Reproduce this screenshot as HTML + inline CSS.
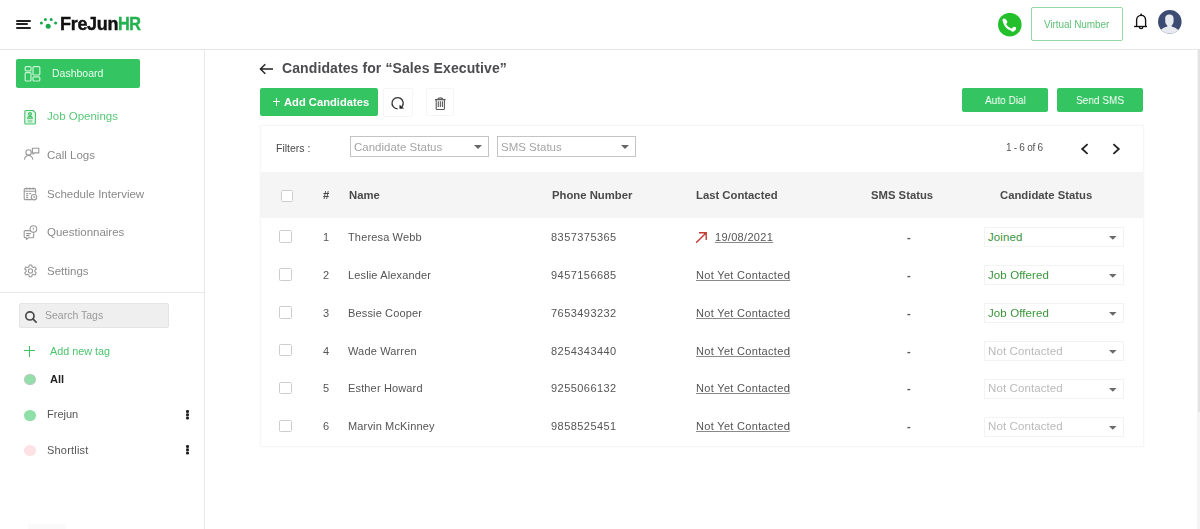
<!DOCTYPE html>
<html><head><meta charset="utf-8">
<style>
*{margin:0;padding:0;box-sizing:border-box}
html,body{width:1200px;height:529px;overflow:hidden;background:#fff;font-family:"Liberation Sans",sans-serif;position:relative}
.a{position:absolute;white-space:nowrap;line-height:1;will-change:transform}
.hdr{position:absolute;left:0;top:0;width:1200px;height:50px;border-bottom:1px solid #e6e6e6;background:#fff}
.side{position:absolute;left:0;top:50px;width:205px;height:479px;border-right:1px solid #e8e8e8}
.nav{font-size:11.5px;color:#8a8a8a}
.btn{position:absolute;background:#34c462;border-radius:2px;color:#fff}
.sel{position:absolute;border:1px solid #c4c4c4;background:#fff}
.tri{position:absolute;width:0;height:0;border-left:4px solid transparent;border-right:4px solid transparent;border-top:4px solid #666}
.th{font-size:11.3px;font-weight:bold;color:#4a4a4a}
.td{font-size:11px;color:#555}
.cb{position:absolute;width:12.8px;height:12.8px;border:1px solid #cdcdcd;border-radius:1.5px;background:#fff}
.lnk{font-size:11px;color:#555;text-decoration:underline;text-decoration-color:#8a8a8a}
.cs{position:absolute;left:984px;width:140px;height:20px;border:1px solid #f3f3f3;background:#fff}
.cst{position:absolute;left:3px;top:3.9px;font-size:11.5px;letter-spacing:0.1px;line-height:1;white-space:nowrap}
.tri2{position:absolute;left:123.7px;top:8px}
</style></head><body>

<!-- HEADER -->
<div class="hdr"></div>
<div class="a" style="left:16.3px;top:19.6px;width:15px;height:1.7px;background:#222;border-radius:1px"></div>
<div class="a" style="left:16.3px;top:23.3px;width:11.5px;height:1.7px;background:#222;border-radius:1px"></div>
<div class="a" style="left:16.3px;top:27.2px;width:15px;height:1.7px;background:#222;border-radius:1px"></div>
<svg class="a" style="left:38px;top:15px" width="22" height="16" viewBox="38 15 22 16">
 <circle cx="41.4" cy="23" r="1.5" fill="#19a94a"/>
 <circle cx="45.4" cy="19.5" r="1.5" fill="#19a94a"/>
 <circle cx="51.2" cy="19.5" r="1.5" fill="#19a94a"/>
 <circle cx="55.6" cy="23" r="1.5" fill="#19a94a"/>
 <circle cx="48.2" cy="26.3" r="2.5" fill="#19a94a"/>
</svg>
<div class="a" style="left:60px;top:15px;font-size:18px;font-weight:bold;color:#111;letter-spacing:-0.3px;-webkit-text-stroke:0.4px #111">FreJun<span style="display:inline-block;transform:scaleX(0.9);transform-origin:0 0;color:#21b24f;letter-spacing:-0.4px;-webkit-text-stroke:0.4px #21b24f">HR</span></div>

<svg class="a" style="left:998.2px;top:12.5px" width="24" height="24" viewBox="0 0 24 24">
 <circle cx="11.8" cy="11.7" r="11.8" fill="#23c02c"/>
 <g fill="#fff"><ellipse cx="6.9" cy="8.1" rx="1.9" ry="2.9" transform="rotate(-38 6.9 8.1)"/><ellipse cx="15.6" cy="16.2" rx="2.9" ry="1.9" transform="rotate(-38 15.6 16.2)"/></g><path d="M6.2 9.3Q7.6 15.2 14.4 17" fill="none" stroke="#fff" stroke-width="2.2" stroke-linecap="round"/>
</svg>
<div class="a" style="left:1031px;top:7px;width:92px;height:34px;border:1px solid #92d9a5;border-radius:2px"></div>
<div class="a" style="left:1044.3px;top:19.8px;font-size:10px;color:#5fc076;letter-spacing:-0.1px">Virtual Number</div>
<svg class="a" style="left:1132px;top:12px" width="17" height="19" viewBox="0 0 17 19" fill="none" stroke="#111" stroke-width="1.35">
 <path d="M4.6 14.2V8.2C4.6 5.1 6.4 3.3 9.1 3.3S13.6 5.1 13.6 8.2V14.2"/>
 <path d="M2.1 14.5H15"/>
 <path d="M7.4 14.9a1.7 1.7 0 0 0 3.4 0"/>
 <circle cx="9.1" cy="2.4" r="0.9" fill="#111" stroke="none"/>
</svg>
<svg class="a" style="left:1158px;top:9.5px" width="24" height="24" viewBox="0 0 24 24">
 <defs><clipPath id="av"><circle cx="11.8" cy="11.8" r="11.8"/></clipPath></defs>
 <circle cx="11.8" cy="11.8" r="11.8" fill="#3b4b72"/>
 <g clip-path="url(#av)">
  <path d="M7.2 9C7.2 5.5 9 4.6 11.4 4.6S15.6 5.5 15.6 9V11C15.6 13 14.6 14.5 13.6 15.5V16.5C15.5 17 18.5 18 21 20.5V26H2V20.5C4.5 18 7.3 17 9.3 16.5V15.5C8.2 14.5 7.2 13 7.2 11Z" fill="#e7eaef"/>
 </g>
</svg>

<!-- SIDEBAR -->
<div class="side"></div>
<div class="btn" style="left:16px;top:59px;width:124px;height:29px"></div>
<svg class="a" style="left:24px;top:65px" width="18" height="18" viewBox="0 0 18 18" fill="none" stroke="#c8f5d4" stroke-width="1.2">
 <rect x="1.2" y="1.6" width="5.8" height="4.3" rx="1"/>
 <rect x="1.2" y="7.6" width="5.8" height="8.4" rx="1"/>
 <rect x="9" y="1.6" width="6.8" height="8.4" rx="1"/>
 <rect x="9" y="11.8" width="6.8" height="4.2" rx="1"/>
</svg>
<div class="a" style="left:52px;top:67.6px;font-size:10.5px;color:#eafff0">Dashboard</div>

<svg class="a" style="left:23px;top:109px" width="14" height="17" viewBox="0 0 14 17" fill="none" stroke="#45c46a" stroke-width="1.1">
 <path d="M2.9 1.5H10.2L12.4 3.7V14C12.4 14.7 12 15 11.3 15H2.9C2.2 15 1.8 14.7 1.8 14V2.6C1.8 1.9 2.2 1.5 2.9 1.5Z" fill="#e6f7ea"/>
 <circle cx="7" cy="5.1" r="1.5" fill="#9fe0b0"/>
 <path d="M4.6 9.2c.3-1.400 1.100-2 2.400-2s2.100.6 2.400 2z" fill="#9fe0b0"/>
 <path d="M4.6 11.2h4.8M4.6 12.9h4.8" stroke="#7fd698"/>
</svg>
<div class="a nav" style="left:47.2px;top:111px;color:#59c878">Job Openings</div>

<svg class="a" style="left:23px;top:147px" width="18" height="14" viewBox="0 0 18 14" fill="none" stroke="#999" stroke-width="1.1">
 <circle cx="5.6" cy="5.4" r="2.7"/>
 <path d="M1.4 12.6c.4-2.700 2-4.100 4.200-4.100s3.800 1.400 4.200 4.100"/>
 <path d="M9.4 1.3h6.400v4.600h-4.300l-1.400 1.200v-1.200h-.7z"/>
</svg>
<div class="a nav" style="left:47.2px;top:149.8px">Call Logs</div>

<svg class="a" style="left:23px;top:187px" width="15" height="14" viewBox="0 0 15 14" fill="none" stroke="#999" stroke-width="1.1">
 <path d="M8.800 12.6H2.200c-.6 0-1-.4-1-1V2.600c0-.6.4-1 1-1h9.400c.6 0 1 .4 1 1v4.200"/>
 <path d="M1.200 4.200h11.400M3.600 .6v2M6.900 .6v2M10.200 .6v2"/>
 <path d="M3.2 6.600h2M6.200 6.600h2M3.200 8.600h2M3.200 10.600h2"/>
 <circle cx="11" cy="10.2" r="2.700"/>
 <path d="M11 8.900v1.400l.9.6"/>
</svg>
<div class="a nav" style="left:47.2px;top:188.5px">Schedule Interview</div>

<svg class="a" style="left:23px;top:225px" width="16" height="15" viewBox="0 0 16 15" fill="none" stroke="#999" stroke-width="1.1">
 <circle cx="10.4" cy="4.1" r="3.300"/>
 <path d="M10.4 2.8v1.800M10.4 5.500v.3"/>
 <path d="M7.400 5.600H2.200c-.6 0-1 .4-1 1v5.200c0 .6.4 1 1 1h1.200v1.600l2-1.600h4.300c.6 0 1-.4 1-1V8.200"/>
 <path d="M3.200 8.600h4.600M3.200 10.600h3.400"/>
</svg>
<div class="a nav" style="left:47.2px;top:227px">Questionnaires</div>

<svg class="a" style="left:23px;top:263.5px" width="15" height="15" viewBox="0 0 15 15" fill="none" stroke="#999" stroke-width="1.1">
 <path d="M6.300 1h2.400l.4 1.800 1.200.7 1.800-.6 1.200 2.100-1.400 1.200v1.400l1.400 1.200-1.200 2.100-1.800-.6-1.200.7-.4 1.800H6.300l-.4-1.800-1.200-.7-1.800.6-1.200-2.100 1.400-1.200V6.200L1.700 5l1.200-2.100 1.800.6 1.200-.7z" stroke-linejoin="round"/>
 <circle cx="7.500" cy="6.900" r="2.100"/>
</svg>
<div class="a nav" style="left:47.2px;top:265.8px">Settings</div>

<div class="a" style="left:0;top:292px;width:205px;height:1px;background:#e8e8e8"></div>

<div class="a" style="left:18.5px;top:303px;width:149.5px;height:25px;background:#efefef;border:1px solid #e4e4e4;border-radius:2px"></div>
<svg class="a" style="left:24px;top:310px" width="14" height="14" viewBox="0 0 14 14" fill="none" stroke="#4a4a4a" stroke-width="1.7">
 <circle cx="5.9" cy="5.9" r="4.1"/>
 <path d="M8.9 8.9l3.2 3.2" stroke-linecap="round"/>
</svg>
<div class="a" style="left:45px;top:310.3px;font-size:10.5px;color:#9a9a9a">Search Tags</div>

<div class="a" style="left:24px;top:350.3px;width:11px;height:1.4px;background:#3cc464"></div>
<div class="a" style="left:28.8px;top:345.5px;width:1.4px;height:11px;background:#3cc464"></div>
<div class="a" style="left:50px;top:346px;font-size:10.8px;color:#4cc46e">Add new tag</div>

<div class="a" style="left:24px;top:374px;width:11.5px;height:11px;border-radius:50%;background:#93dfaa;border:1px solid #b9c9bd"></div>
<div class="a" style="left:50px;top:373.5px;font-size:11px;font-weight:bold;color:#222">All</div>

<div class="a" style="left:24px;top:409.5px;width:11.5px;height:11px;border-radius:50%;background:#8fe0a6"></div>
<div class="a" style="left:47px;top:409px;font-size:11px;color:#555">Frejun</div>
<div class="a" style="left:186.2px;top:409.5px;width:2.6px;height:2.6px;border-radius:50%;background:#222;box-shadow:0 3.3px 0 #222,0 6.6px 0 #222"></div>

<div class="a" style="left:24px;top:445px;width:11.5px;height:11px;border-radius:50%;background:#fde1e5"></div>
<div class="a" style="left:47px;top:444.5px;font-size:11px;color:#555;letter-spacing:0.2px">Shortlist</div>
<div class="a" style="left:186.2px;top:445px;width:2.6px;height:2.6px;border-radius:50%;background:#222;box-shadow:0 3.3px 0 #222,0 6.6px 0 #222"></div>

<!-- MAIN -->
<svg class="a" style="left:259px;top:63px" width="16" height="12" viewBox="0 0 16 12" fill="none" stroke="#222" stroke-width="1.4">
 <path d="M14 6H1.800M6.300 1.300L1.400 6l4.900 4.700"/>
</svg>
<div class="a" style="left:281.5px;top:60.5px;font-size:14px;font-weight:bold;color:#4b4b50;letter-spacing:0.1px">Candidates for “Sales Executive”</div>

<div class="btn" style="left:260px;top:88px;width:118px;height:28px"></div>
<div class="a" style="left:273px;top:101.2px;width:7px;height:1.2px;background:#fff"></div>
<div class="a" style="left:275.9px;top:98px;width:1.2px;height:7.5px;background:#fff"></div>
<div class="a" style="left:283.6px;top:96.8px;font-size:11.2px;font-weight:bold;color:#fff">Add Candidates</div>

<div class="a" style="left:382.5px;top:88px;width:30px;height:29px;border:1px solid #f5f5f5;border-radius:2px;box-shadow:0 0 1px rgba(0,0,0,0.03)"></div>
<svg class="a" style="left:389px;top:95px" width="18" height="17" viewBox="0 0 18 17" fill="none" stroke="#333" stroke-width="1.3">
 <path d="M8.6 13.8A5.6 5.6 0 1 1 12.9 11.8"/>
 <path d="M10.75 10.3V13.45L14.5 13.25Z" fill="#222" stroke="#222" stroke-width=".5" stroke-linejoin="round"/>
</svg>

<div class="a" style="left:426px;top:88px;width:28px;height:28px;border:1px solid #f5f5f5;border-radius:2px;box-shadow:0 0 1px rgba(0,0,0,0.03)"></div>
<svg class="a" style="left:434px;top:97px" width="13" height="14" viewBox="0 0 13 14" fill="none" stroke="#5a5a5a" stroke-width="1.1">
 <path d="M2.2 3V11.7C2.2 12.2 2.5 12.5 3 12.5H9.6C10.1 12.5 10.4 12.2 10.4 11.7V3"/>
 <path d="M1.1 2.6H11.5" stroke-width="1.3"/>
 <path d="M4 2.4C4 1.400 4.700 0.9 6.300 0.9S8.600 1.400 8.600 2.4" stroke-width="1.2"/>
 <path d="M4.3 4.3V10M6.35 4.3V10M8.4 4.3V10"/>
</svg>

<div class="btn" style="left:962px;top:88px;width:86px;height:24px"></div>
<div class="a" style="left:985px;top:94.6px;font-size:11px;color:#fff;transform:scaleX(0.915);transform-origin:0 0">Auto Dial</div>
<div class="btn" style="left:1057px;top:88px;width:86px;height:24px"></div>
<div class="a" style="left:1075.5px;top:94.6px;font-size:11px;color:#fff;transform:scaleX(0.915);transform-origin:0 0">Send SMS</div>

<!-- CARD -->
<div class="a" style="left:259.5px;top:124.5px;width:883.5px;height:322px;border:1px solid #f6f6f6;box-shadow:0 0 2px rgba(0,0,0,0.04);background:#fff"></div>
<div class="a" style="left:276.4px;top:142.7px;font-size:10.5px;color:#4a4a4a">Filters :</div>
<div class="sel" style="left:350px;top:136px;width:139px;height:21px"></div>
<div class="a" style="left:354.4px;top:141.5px;font-size:11.5px;color:#a5a5a5">Candidate Status</div>
<div class="tri" style="left:473.5px;top:145px"></div>
<div class="sel" style="left:497px;top:136px;width:139px;height:21px"></div>
<div class="a" style="left:501.4px;top:141.5px;font-size:11.5px;color:#a5a5a5">SMS Status</div>
<div class="tri" style="left:620.5px;top:145px"></div>

<div class="a" style="left:1006px;top:143px;font-size:10px;color:#555;letter-spacing:-0.27px">1 - 6 of 6</div>
<svg class="a" style="left:1079px;top:142px" width="12" height="14" viewBox="0 0 12 14" fill="none" stroke="#222" stroke-width="1.8">
 <path d="M8.600 2.200L3.200 7l5.400 4.800"/>
</svg>
<svg class="a" style="left:1110px;top:142px" width="12" height="14" viewBox="0 0 12 14" fill="none" stroke="#222" stroke-width="1.8">
 <path d="M3.400 2.200L8.800 7l-5.400 4.800"/>
</svg>

<div class="a" style="left:260px;top:172px;width:883px;height:46px;background:#f5f5f5"></div>
<div class="cb" style="left:280.5px;top:189.5px"></div>
<div class="a th" style="left:323px;top:189.5px">#</div>
<div class="a th" style="left:349px;top:189.5px">Name</div>
<div class="a th" style="left:552px;top:189.5px">Phone Number</div>
<div class="a th" style="left:695.5px;top:189.5px">Last Contacted</div>
<div class="a th" style="left:870.5px;top:189.5px">SMS Status</div>
<div class="a th" style="left:999.5px;top:189.5px">Candidate Status</div>

<!-- ROWS -->
<div class="a" style="left:1197px;top:50px;width:3px;height:479px;background:#f4f4f4"></div>
<div class="a" style="left:1197.5px;top:50px;width:2.5px;height:362px;background:#e3e3e3"></div>
<div class="a" style="left:28px;top:524px;width:38px;height:5px;background:#fafafa"></div>
<!--ROWS-->
<div class="cb" style="left:279px;top:230.0px"></div>
<div class="a td" style="left:323.4px;top:231.8px">1</div>
<div class="a td" style="left:348px;top:231.8px;letter-spacing:0.15px">Theresa Webb</div>
<div class="a td" style="left:550.8px;top:231.8px;letter-spacing:0.45px">8357375365</div>
<svg class="a" style="left:694.6px;top:231.1px" width="13" height="13" viewBox="0 0 13 13" fill="none" stroke="#bf3a32" stroke-width="1.4"><path d="M1.200 11.800L11 2M4 1.800h7.200V9"/></svg>
<div class="a lnk" style="left:715.2px;top:231.8px;letter-spacing:0.3px">19/08/2021</div>
<div class="a td" style="left:907px;top:231.8px;font-weight:bold">-</div>
<div class="cs" style="top:227.0px"><div class="cst" style="color:#3a963a">Joined</div><svg class="tri2" width="8" height="4" viewBox="0 0 8 4"><path d="M0 0H7.6L3.8 3.8Z" fill="#6a6a6a"/></svg></div>
<div class="cb" style="left:279px;top:267.9px"></div>
<div class="a td" style="left:323.4px;top:269.7px">2</div>
<div class="a td" style="left:348px;top:269.7px;letter-spacing:0.15px">Leslie Alexander</div>
<div class="a td" style="left:550.8px;top:269.7px;letter-spacing:0.45px">9457156685</div>
<div class="a lnk" style="left:695.5px;top:269.7px;letter-spacing:0.32px">Not Yet Contacted</div>
<div class="a" style="left:789.3px;top:271.4px;width:1px;height:8.5px;background:#c4c4c4"></div>
<div class="a td" style="left:907px;top:269.7px;font-weight:bold">-</div>
<div class="cs" style="top:264.9px"><div class="cst" style="color:#3a963a">Job Offered</div><svg class="tri2" width="8" height="4" viewBox="0 0 8 4"><path d="M0 0H7.6L3.8 3.8Z" fill="#6a6a6a"/></svg></div>
<div class="cb" style="left:279px;top:305.8px"></div>
<div class="a td" style="left:323.4px;top:307.6px">3</div>
<div class="a td" style="left:348px;top:307.6px;letter-spacing:0.15px">Bessie Cooper</div>
<div class="a td" style="left:550.8px;top:307.6px;letter-spacing:0.45px">7653493232</div>
<div class="a lnk" style="left:695.5px;top:307.6px;letter-spacing:0.32px">Not Yet Contacted</div>
<div class="a" style="left:789.3px;top:309.3px;width:1px;height:8.5px;background:#c4c4c4"></div>
<div class="a td" style="left:907px;top:307.6px;font-weight:bold">-</div>
<div class="cs" style="top:302.8px"><div class="cst" style="color:#3a963a">Job Offered</div><svg class="tri2" width="8" height="4" viewBox="0 0 8 4"><path d="M0 0H7.6L3.8 3.8Z" fill="#6a6a6a"/></svg></div>
<div class="cb" style="left:279px;top:343.7px"></div>
<div class="a td" style="left:323.4px;top:345.5px">4</div>
<div class="a td" style="left:348px;top:345.5px;letter-spacing:0.15px">Wade Warren</div>
<div class="a td" style="left:550.8px;top:345.5px;letter-spacing:0.45px">8254343440</div>
<div class="a lnk" style="left:695.5px;top:345.5px;letter-spacing:0.32px">Not Yet Contacted</div>
<div class="a" style="left:789.3px;top:347.2px;width:1px;height:8.5px;background:#c4c4c4"></div>
<div class="a td" style="left:907px;top:345.5px;font-weight:bold">-</div>
<div class="cs" style="top:340.7px"><div class="cst" style="color:#bababa">Not Contacted</div><svg class="tri2" width="8" height="4" viewBox="0 0 8 4"><path d="M0 0H7.6L3.8 3.8Z" fill="#6a6a6a"/></svg></div>
<div class="cb" style="left:279px;top:381.6px"></div>
<div class="a td" style="left:323.4px;top:383.4px">5</div>
<div class="a td" style="left:348px;top:383.4px;letter-spacing:0.15px">Esther Howard</div>
<div class="a td" style="left:550.8px;top:383.4px;letter-spacing:0.45px">9255066132</div>
<div class="a lnk" style="left:695.5px;top:383.4px;letter-spacing:0.32px">Not Yet Contacted</div>
<div class="a" style="left:789.3px;top:385.1px;width:1px;height:8.5px;background:#c4c4c4"></div>
<div class="a td" style="left:907px;top:383.4px;font-weight:bold">-</div>
<div class="cs" style="top:378.6px"><div class="cst" style="color:#bababa">Not Contacted</div><svg class="tri2" width="8" height="4" viewBox="0 0 8 4"><path d="M0 0H7.6L3.8 3.8Z" fill="#6a6a6a"/></svg></div>
<div class="cb" style="left:279px;top:419.5px"></div>
<div class="a td" style="left:323.4px;top:421.3px">6</div>
<div class="a td" style="left:348px;top:421.3px;letter-spacing:0.15px">Marvin McKinney</div>
<div class="a td" style="left:550.8px;top:421.3px;letter-spacing:0.45px">9858525451</div>
<div class="a lnk" style="left:695.5px;top:421.3px;letter-spacing:0.32px">Not Yet Contacted</div>
<div class="a" style="left:789.3px;top:423.0px;width:1px;height:8.5px;background:#c4c4c4"></div>
<div class="a td" style="left:907px;top:421.3px;font-weight:bold">-</div>
<div class="cs" style="top:416.5px"><div class="cst" style="color:#bababa">Not Contacted</div><svg class="tri2" width="8" height="4" viewBox="0 0 8 4"><path d="M0 0H7.6L3.8 3.8Z" fill="#6a6a6a"/></svg></div>
<!--/ROWS-->
</body></html>
